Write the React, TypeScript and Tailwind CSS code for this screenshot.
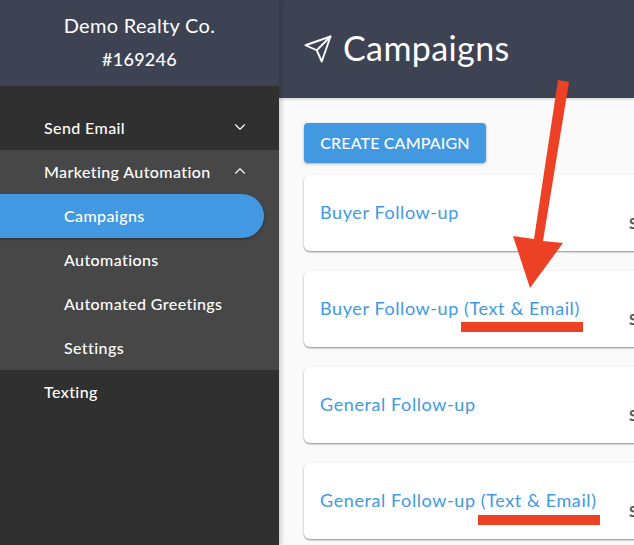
import { FiChevronDown, FiChevronUp, FiSend } from 'react-icons/fi';

const CAMPAIGNS = [
  { name: 'Buyer Follow-up', underline: false },
  { name: 'Buyer Follow-up (Text & Email)', underline: true },
  { name: 'General Follow-up', underline: false },
  { name: 'General Follow-up (Text & Email)', underline: true },
];

const SUB_ITEMS = ['Campaigns', 'Automations', 'Automated Greetings', 'Settings'];

export default function App() {
  return (
    <div className="flex h-[545px] w-[634px] overflow-hidden bg-[#fafafa] font-['Lato','Noto_Sans',sans-serif] relative">
      {/* Sidebar */}
      <aside className="w-[279px] shrink-0 bg-[#303030] text-white shadow-[2px_0_5px_rgba(0,0,0,0.2)] z-10">
        <div className="h-[86px] bg-[#3e4354] pt-[10px] text-center">
          <p className="text-[20px] leading-[30px] tracking-[0.3px]">Demo Realty Co.</p>
          <p className="text-[18px] leading-[30px] mt-[4px] font-medium tracking-[0.3px]">#169246</p>
        </div>
        <nav className="pt-5 text-[16px] font-medium tracking-[0.4px]">
          <div className="h-11 pl-11 pr-[30px] flex items-center justify-between">
            <span>Send Email</span>
            <FiChevronDown className="w-[18px] h-[18px] mb-[2px] stroke-[1.5]" />
          </div>
          <div className="bg-[#474747]">
            <div className="h-11 pl-11 pr-[30px] flex items-center justify-between">
              <span>Marketing Automation</span>
              <FiChevronUp className="w-[18px] h-[18px] mb-[2px] stroke-[1.5]" />
            </div>
            {SUB_ITEMS.map((item, i) => (
              <div
                key={item}
                className={`h-11 pl-16 flex items-center ${
                  i === 0 ? 'w-[264px] bg-[#4299e1] rounded-r-[22px] shadow-[0_1px_3px_rgba(0,0,0,0.4)]' : ''
                }`}
              >
                {item}
              </div>
            ))}
          </div>
          <div className="h-11 pl-11 flex items-center">Texting</div>
        </nav>
      </aside>

      {/* Main */}
      <main className="flex-1 min-w-0">
        <header className="h-[98px] bg-[#3e4354] flex items-center pl-[24px] text-white shadow-[0_1px_3px_rgba(0,0,0,0.2)]">
          <FiSend className="w-[30px] h-[30px] mr-[10px] stroke-[1.5]" />
          <h1 className="text-[34px] tracking-[0.4px] leading-none mb-[3px]">Campaigns</h1>
        </header>
        <div className="pl-[25px] pt-[25px] w-[560px]">
          <button className="h-10 w-[182px] rounded bg-[#4299e1] text-white text-[16px] font-medium tracking-[0.15px] shadow-[0_1px_3px_rgba(0,0,0,0.3)]">
            CREATE CAMPAIGN
          </button>
          <div className="mt-3 flex flex-col gap-5">
            {CAMPAIGNS.map((c) => (
              <div
                key={c.name}
                className="h-[76px] rounded-md bg-white pl-4 pr-2 flex justify-between shadow-[0_1px_2px_rgba(0,0,0,0.45)]"
              >
                <a className="mt-[25px] text-[18px] leading-6 text-[#4299e1] tracking-[0.6px] whitespace-nowrap">
                  {c.name}
                </a>
                <span className="absolute left-[629px] mt-[38px] text-[15px] leading-5 font-bold text-[#555555]">
                  Steps
                </span>
              </div>
            ))}
          </div>
        </div>
      </main>

      {/* Annotations */}
      <svg className="absolute left-0 top-0 z-20 pointer-events-none" width="634" height="545" viewBox="0 0 634 545">
        <polygon points="558,80 569,82 543,241 563,243 530,288 513,236 534,239" fill="#ec4125" />
        <rect x="461" y="322" width="122" height="10" fill="#ec4125" />
        <rect x="478" y="515" width="122" height="10" fill="#ec4125" />
      </svg>
    </div>
  );
}
